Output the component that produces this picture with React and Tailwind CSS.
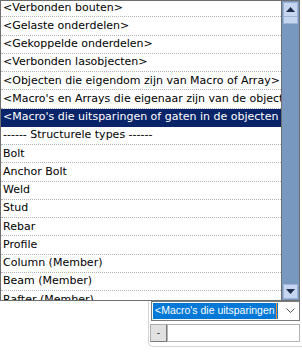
const items = [
  '<Verbonden bouten>',
  '<Gelaste onderdelen>',
  '<Gekoppelde onderdelen>',
  '<Verbonden lasobjecten>',
  '<Objecten die eigendom zijn van Macro of Array>',
  "<Macro's en Arrays die eigenaar zijn van de objecten>",
  "<Macro's die uitsparingen of gaten in de objecten maken>",
  '------ Structurele types ------',
  'Bolt',
  'Anchor Bolt',
  'Weld',
  'Stud',
  'Rebar',
  'Profile',
  'Column (Member)',
  'Beam (Member)',
  'Rafter (Member)',
  'Plate (Member)',
];

const selected = 6;

function ScrollButton({ up }) {
  return (
    <div className="flex h-[15px] w-[15px] items-center justify-center border border-[#9db3d6] bg-[#c6d6f1]">
      <svg width="9" height="5" viewBox="0 0 9 5">
        {up ? (
          <polygon points="4.5,0 9,5 0,5" fill="#1d2c4c" />
        ) : (
          <polygon points="0,0 9,0 4.5,5" fill="#1d2c4c" />
        )}
      </svg>
    </div>
  );
}

export default function App() {
  return (
    <div className="h-[352px] w-[302px] overflow-hidden bg-white">
      {/* dropdown list */}
      <div
        className="flex h-[301px] w-[300px] border border-[#6e6e6e]"
        style={{ fontFamily: '"DejaVu Sans", Verdana, sans-serif' }}
      >
        <div className="flex-1 overflow-hidden">
          <div className="-mt-[2px]">
            {items.map((item, i) => (
              <div
                key={item}
                className={`h-[18.25px] overflow-hidden whitespace-nowrap border-b border-dotted pt-[0.5px] pl-[2px] text-[11px] leading-[16.75px] ${
                  i === selected
                    ? 'border-[#0a246a] bg-[#0a246a] text-white'
                    : 'border-[#b4b4b4] text-black'
                }`}
              >
                {item}
              </div>
            ))}
          </div>
        </div>
        <div className="flex w-[18px] flex-col border-l border-[#6e6e6e] bg-[#7898c0] p-[1px]">
          <ScrollButton up />
          <div className="h-[7px] w-[15px] border border-t-0 border-[#9db3d6] bg-[#c6d6f1]" />
          <div className="flex-1" />
          <ScrollButton />
        </div>
      </div>

      {/* panel under the list */}
      <div
        className="ml-[148px] h-[46px] rounded-bl-[5px] border-b border-l border-[#d4d4d4]"
        style={{ fontFamily: '"Liberation Sans", Arial, sans-serif' }}
      >
        <div className="ml-[2px] flex h-[20px] w-[149px] items-center border border-[#7a7a7a] bg-white pl-[1px]">
          <div className="relative flex h-[16px] items-center bg-[#0078d7] pr-[3px] pl-[2px] text-[10.5px] text-white">
            &lt;Macro's die uitsparingen
            <span className="absolute top-0 right-[1px] h-[16px] w-[1px] bg-[#ff8a24]" />
          </div>
          <div className="flex flex-1 items-center justify-end pr-[4px]">
            <svg width="9" height="6" viewBox="0 0 9 6">
              <polyline points="0.5,0.5 4.5,4.5 8.5,0.5" fill="none" stroke="#555" strokeWidth="1" />
            </svg>
          </div>
        </div>
        <div className="mt-[3px] ml-[1px] flex h-[18px]">
          <div className="flex w-[17px] items-center justify-center border border-[#adadad] border-r-[#7a7a7a] border-b-[#7a7a7a] bg-[#e1e1e1] text-[10px] leading-none text-[#333]">
            -
          </div>
          <div className="w-[133px] border border-[#b4b4b4] bg-white" />
        </div>
      </div>
    </div>
  );
}
